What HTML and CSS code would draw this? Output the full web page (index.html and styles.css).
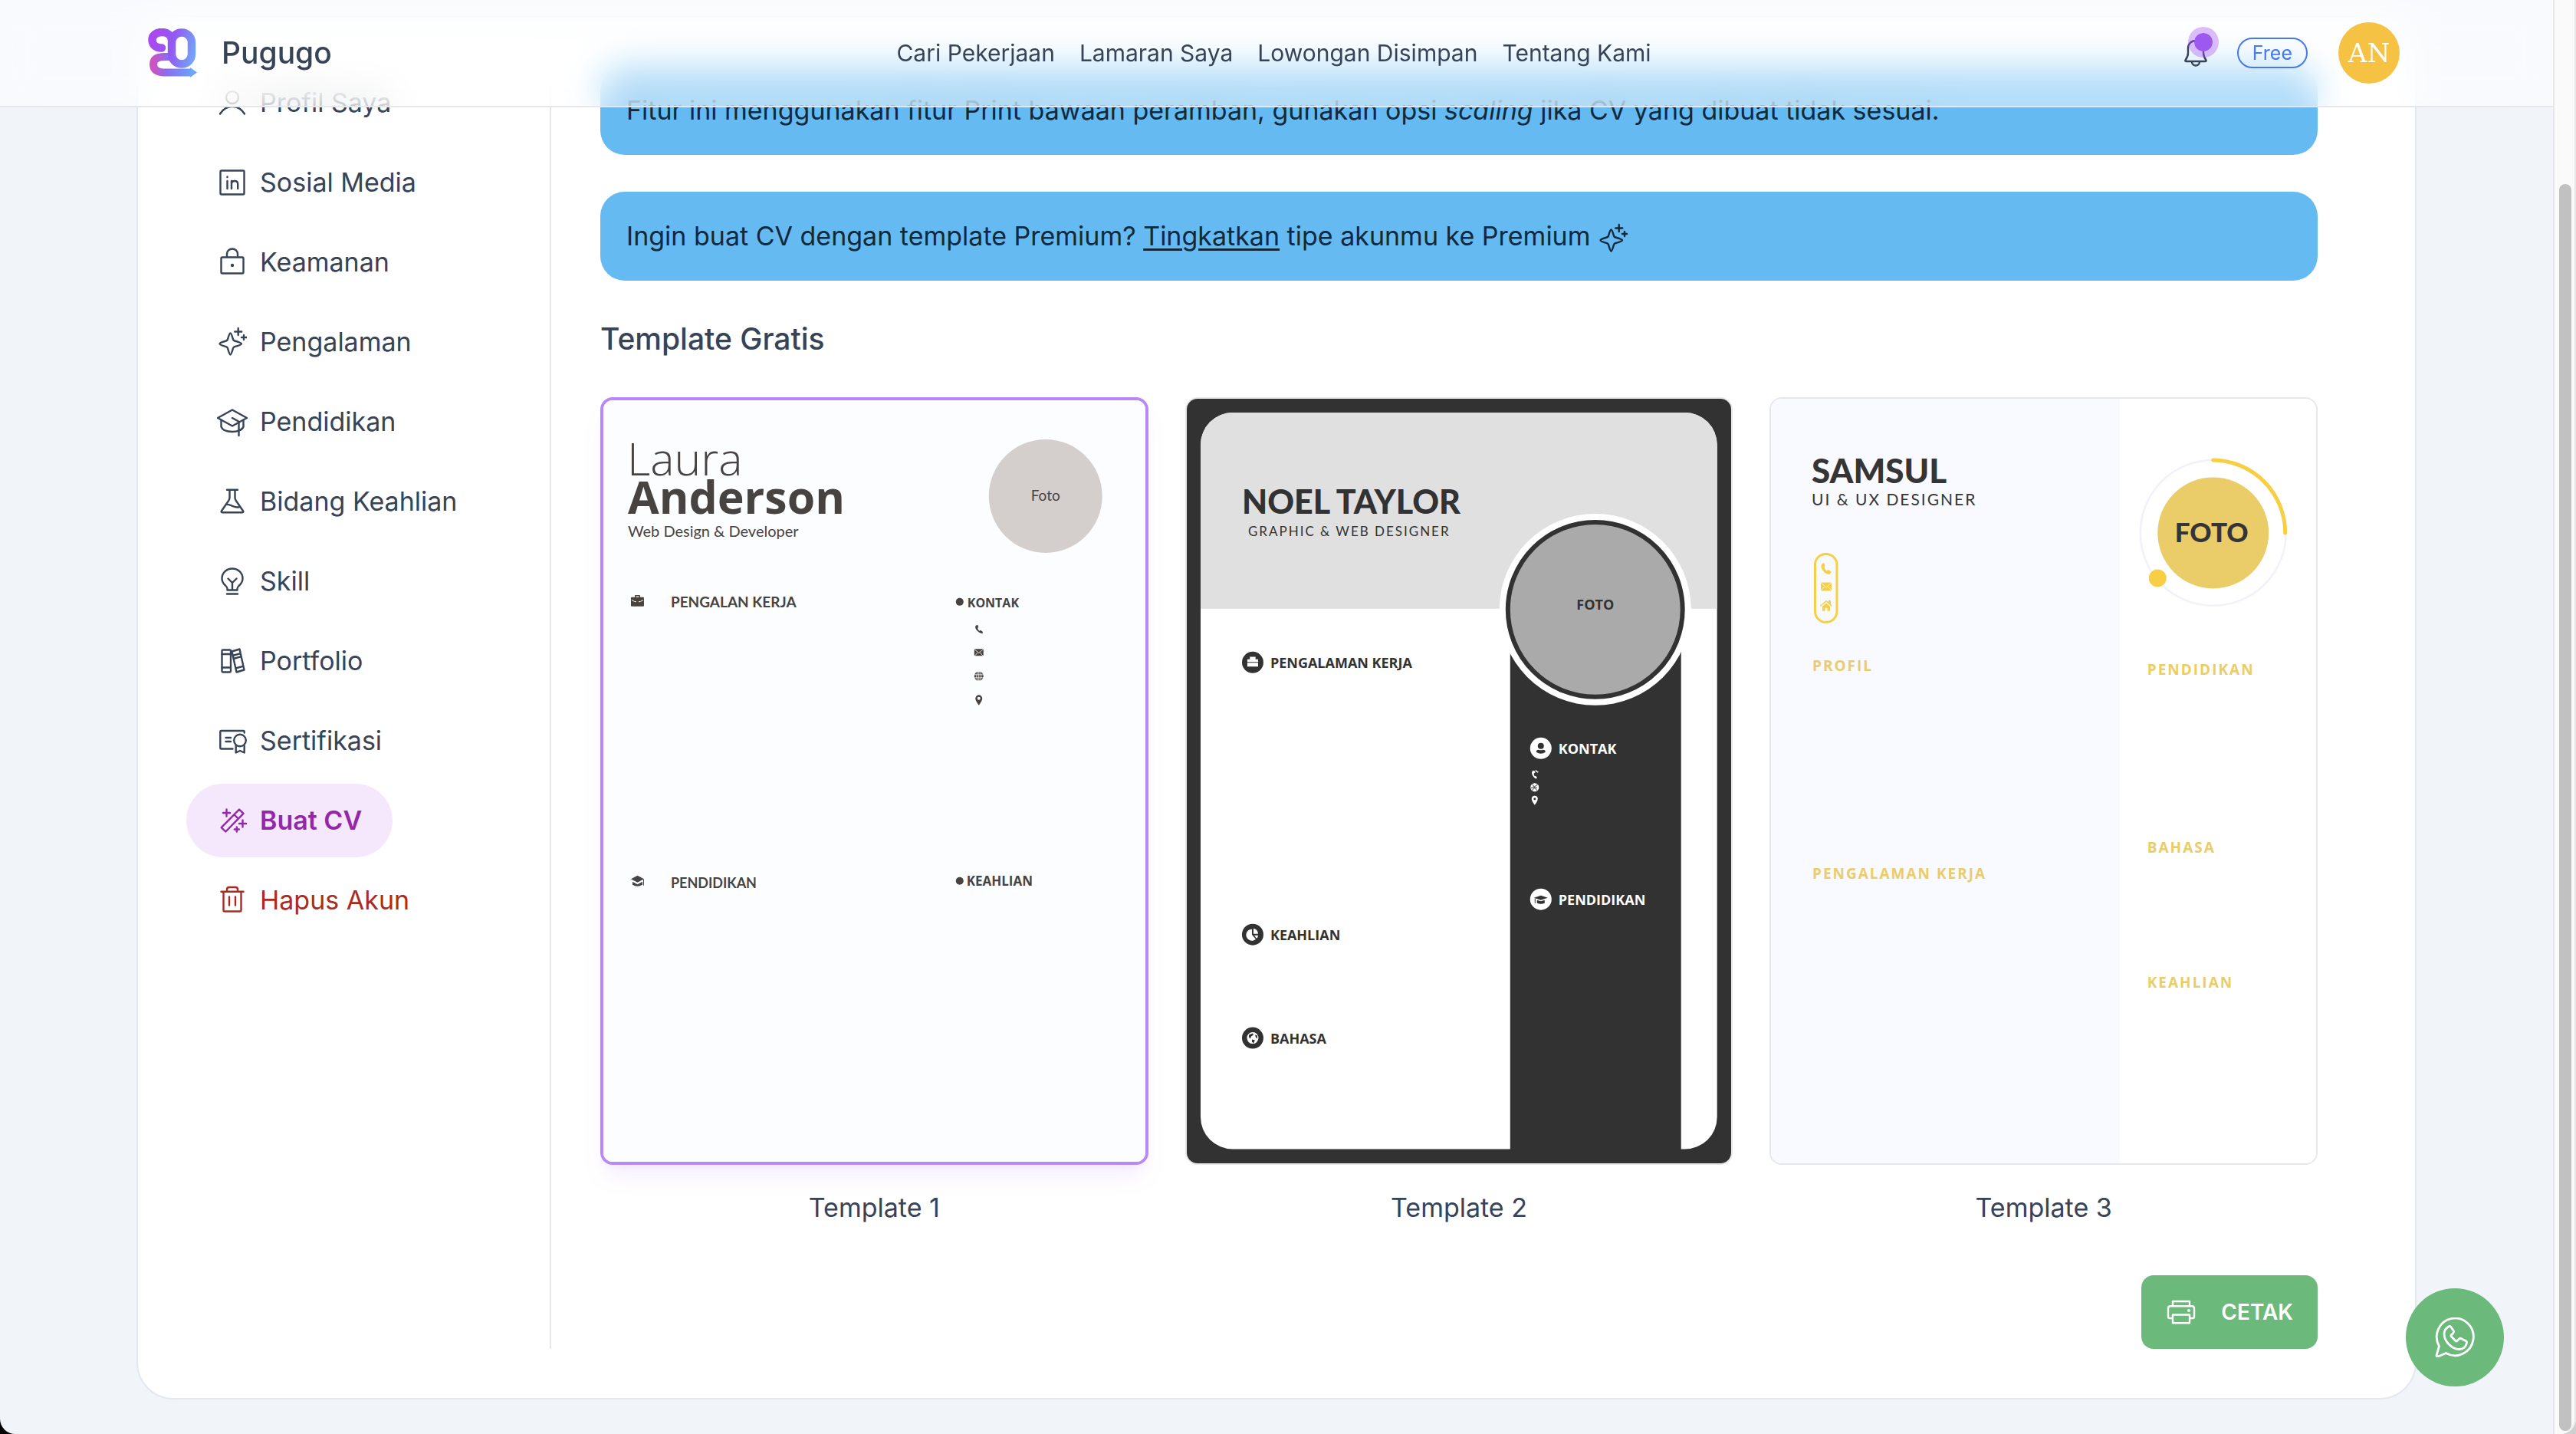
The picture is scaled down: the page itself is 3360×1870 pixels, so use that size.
FILE: index.html
```html
<!DOCTYPE html>
<html lang="id">
<head>
<meta charset="utf-8">
<meta name="viewport" content="width=device-width, initial-scale=1">
<title>Pugugo - Buat CV</title>
<link rel="stylesheet" href="styles.css">
</head>
<body>
<header class="topbar">
  <a class="brand" href="#">
    <svg class="brand-logo" viewBox="0 0 64 64" fill="none" aria-hidden="true">
      <defs>
        <linearGradient id="logo-g" gradientUnits="userSpaceOnUse" x1="4" y1="20" x2="62" y2="34">
          <stop offset="0" stop-color="#a94af0"/><stop offset=".45" stop-color="#9358f3"/><stop offset="1" stop-color="#72a8f8"/>
        </linearGradient>
        <linearGradient id="logo-b" gradientUnits="userSpaceOnUse" x1="6" y1="56" x2="60" y2="58">
          <stop offset="0" stop-color="#cf52c0"/><stop offset=".35" stop-color="#8b6df0"/><stop offset="1" stop-color="#6ba6f7"/>
        </linearGradient>
      </defs>
      <path d="M29 37H22Q7 37 7 47T20 57.500H56" stroke="url(#logo-b)" stroke-width="10"/>
      <path d="M55 51l9 6.500-9 6.500z" fill="#6ba6f7"/>
      <path d="M18 25.500C10 26 5.500 21 5.500 15S11 5 18 5s13 4 13 11" stroke="url(#logo-g)" stroke-width="10.500" stroke-linecap="round"/>
      <rect x="31" y="5.500" width="26" height="41" rx="13" stroke="url(#logo-g)" stroke-width="10.500"/>
    </svg>
    <span>Pugugo</span>
  </a>
  <nav class="topnav" aria-label="Utama">
    <a href="#">Cari Pekerjaan</a>
    <a href="#">Lamaran Saya</a>
    <a href="#">Lowongan Disimpan</a>
    <a href="#">Tentang Kami</a>
  </nav>
  <div class="account">
    <button class="bell" type="button" aria-label="Notifikasi">
      <svg viewBox="0 0 40 40" fill="none" stroke="currentColor" stroke-width="2.400" stroke-linecap="round" stroke-linejoin="round" aria-hidden="true">
        <path d="M20 4c-6 0-10 4.500-10 10v6c0 4-1 6-3.500 9.500-.5 1 0 1.500 1 1.500h25c1 0 1.500-.5 1-1.500C31 26 30 24 30 20v-6c0-5.500-4-10-10-10z"/>
        <path d="M15 31.500c0 3 2.300 5 5 5s5-2 5-5"/>
      </svg>
      <span class="bell-dot"></span>
    </button>
    <span class="plan">Free</span>
    <a class="avatar" href="#">AN</a>
  </div>
</header>

<main class="panel">
  <nav class="sidebar" aria-label="Profil">
    <a class="side-link" href="#">
      <svg class="icon" viewBox="0 0 40 40"><circle cx="20" cy="13" r="8"/><path d="M4 34.500C8 28 13 25 20 25s12 3 16 9.500"/></svg>Profil Saya</a>
    <a class="side-link" href="#">
      <svg class="icon" viewBox="0 0 40 40"><rect x="4.500" y="4.500" width="31" height="31" rx="1.500"/><path d="M13.500 18v10M13.500 12.500v.5M19 28V18M19 22c0-2.500 1.800-4 4.200-4s4 1.500 4 4v6"/></svg>Sosial Media</a>
    <a class="side-link" href="#">
      <svg class="icon" viewBox="0 0 40 40"><rect x="5.500" y="13.500" width="29" height="21" rx="1.500"/><path d="M13 13V9a7 6.500 0 0 1 14 0v4"/><circle cx="20" cy="24" r="1"/></svg>Keamanan</a>
    <a class="side-link" href="#">
      <svg class="icon" viewBox="0 0 40 40"><path d="M17.500 8.500c.8 0 1.500 1 3.500 8 .4 1.200 1 1.700 2 2 7 2 9 2.800 9 3.800s-2 1.900-9 3.800c-1 .4-1.600.9-2 2-2 7-2.700 8.400-3.500 8.400s-1.600-1.500-3.500-8.400c-.4-1.100-1-1.600-2-2-7-1.900-8.500-2.800-8.500-3.800s1.500-1.800 8.500-3.800c1-.3 1.600-.8 2-2 1.900-7 2.700-8 3.500-8z"/><path d="M27.700 2v9M23.200 6.500h9M35 11v6M32 14h6"/></svg>Pengalaman</a>
    <a class="side-link" href="#">
      <svg class="icon" viewBox="0 0 40 40"><path d="M20 4.500 39 15 20 25.500 1 15z"/><path d="M5.500 18v8.500c1.500 4 7 6.500 14.500 6.500 4 0 6.500-.6 8-1.500M34.500 18v8.500c-.8 2.200-3 4-5.500 5M20 15l8.500 4.700V38"/></svg>Pendidikan</a>
    <a class="side-link" href="#">
      <svg class="icon" viewBox="0 0 40 40"><path d="M13 4.700h14M16.500 5v10c0 1.500-.5 2.500-1.200 3.700L5.800 32.500c-.5 1 0 1.700 1 1.700h26.400c1 0 1.500-.7 1-1.700l-9.500-13.800c-.7-1.200-1.200-2.200-1.200-3.700V5M11.500 24c3-.6 5 .5 8.500 1.800 3.500 1.400 6 2 9 1.500"/></svg>Bidang Keahlian</a>
    <a class="side-link" href="#">
      <svg class="icon" viewBox="0 0 40 40"><path d="M13.500 31.500v-2c0-1.500-1-2.500-2.500-4C8.300 23 6.500 20 6.500 16.500 6.500 9 12.500 3.500 20 3.500S33.500 9 33.500 16.500c0 3.500-1.800 6.500-4.500 9-1.500 1.500-2.500 2.500-2.500 4v2zM13 36.500h14M14.500 16.500 20 22l5.500-5.500M20 22v9"/></svg>Skill</a>
    <a class="side-link" href="#">
      <svg class="icon" viewBox="0 0 40 40"><rect x="6.500" y="5.500" width="11.500" height="29" rx="1.200"/><path d="M6.500 11H18M6.500 28.500H18M19.500 7.500l10-3 6 27-10 3zM20.500 13l10-2.800M21.700 17l9.700-2.800M24.500 29.500l10-2.800"/></svg>Portfolio</a>
    <a class="side-link" href="#">
      <svg class="icon" viewBox="0 0 40 40"><path d="M35.700 9.500V8.200c0-.7-.4-1.200-1.200-1.200h-29C4.700 7 4.300 7.500 4.300 8.200v21c0 .8.400 1.300 1.200 1.300h15M11.500 16H18M11.500 21H18"/><circle cx="30" cy="19.500" r="7.800"/><path d="M24.700 26.500v9l5.400-2.500 5.600 2.500v-9"/></svg>Sertifikasi</a>
    <a class="side-link is-active" href="#" aria-current="page">
      <svg class="icon" viewBox="0 0 40 40"><path d="M29 5.500l5.500 5.300L11.300 34.500 5.700 29.200zM22.700 12.500l5 5M12.500 5.500v9M8 10h9M33.500 19.500v9M29 24h9M25.800 28.500v6M22.800 31.500h6"/></svg>Buat CV</a>
    <a class="side-link is-danger" href="#">
      <svg class="icon" viewBox="0 0 40 40"><path d="M5.500 8.700h29M13 8.500V6c0-1.700 1-3 3-3h8c2 0 3 1.300 3 3v2.500M8.500 9v24c0 1 .5 1.500 1.500 1.500h20c1 0 1.500-.5 1.500-1.500V9M16 15.500v11M24 15.500v11"/></svg>Hapus Akun</a>
  </nav>

  <section class="content">
    <p class="alert">Fitur ini menggunakan fitur Print bawaan peramban, gunakan opsi <em>scaling</em> jika CV yang dibuat tidak sesuai.</p>
    <p class="alert">Ingin buat CV dengan template Premium? <a href="#">Tingkatkan</a> tipe akunmu ke Premium
      <svg class="icon alert-icon" viewBox="0 0 40 40" aria-hidden="true"><path d="M17.500 8.500c.8 0 1.500 1 3.500 8 .4 1.200 1 1.700 2 2 7 2 9 2.800 9 3.800s-2 1.900-9 3.800c-1 .4-1.600.9-2 2-2 7-2.700 8.400-3.500 8.400s-1.600-1.500-3.500-8.400c-.4-1.100-1-1.600-2-2-7-1.900-8.500-2.800-8.500-3.800s1.500-1.800 8.500-3.800c1-.3 1.600-.8 2-2 1.900-7 2.700-8 3.500-8z"/><path d="M27.700 2v9M23.200 6.500h9M35 11v6M32 14h6"/></svg></p>
    <h2 class="section-title">Template Gratis</h2>

    <div class="templates">
      <label class="template">
        <input class="template-radio" type="radio" name="template" checked>
        <svg class="preview preview-laura" viewBox="4 4 707 993" preserveAspectRatio="xMidYMid slice">
          <rect width="715" height="1001" fill="#fcfdff"/>
          <text class="f-open w-light" x="35" y="102" font-size="59">Laura</text>
          <text class="f-open w-bold" x="36" y="152" font-size="59">Anderson</text>
          <text class="f-lato" x="36" y="182" font-size="20">Web Design &amp; Developer</text>
          <circle cx="581" cy="129" r="74" fill="#d4cfcc"/>
          <text class="f-lato" x="581" y="135" font-size="19" text-anchor="middle">Foto</text>
          <g>
            <path d="M45 261v-2q0-1 1-1h5q1 0 1 1v2h4q1 0 1 1v10q0 1-1 1H41q-1 0-1-1v-10q0-1 1-1zM46.500 261h4v-1.500h-4z"/>
            <path d="M41 264.500q3.500 2.500 6 2.500M56 264.500q-3.500 2.500-6 2.500" stroke="#fff" fill="none"/>
          </g>
          <text class="f-lato w-bold" x="92" y="274" font-size="19">PENGALAN KERJA</text>
          <circle cx="469" cy="267" r="5"/>
          <text class="f-open w-bold" x="479" y="274" font-size="16">KONTAK</text>
          <path d="M490 298q-2 3 2 7t7 3l0-2-3-2-1.500 1q-2-2-2-4l1-1-1-3z"/>
          <rect x="488" y="328.500" width="12" height="9" rx="1.500"/>
          <path d="M489 329.500l5 4 5-4M489 337l3.500-4M499 337l-3.500-4" stroke="#fff" stroke-width=".8" fill="none"/>
          <circle cx="494" cy="364" r="6"/>
          <path d="M488 362h12M488 366h12M494 358v12" stroke="#fff" stroke-width=".8"/>
          <ellipse cx="494" cy="364" rx="3" ry="6" fill="none" stroke="#fff" stroke-width=".8"/>
          <path d="M494 402q-4.500-6-4.500-9a4.500 4.500 0 0 1 9 0q0 3-4.500 9z"/>
          <circle cx="494" cy="393" r="2" fill="#fff"/>
          <path d="M48.500 624l8.500 4.500-8.500 4.500-8.500-4.500zM42 632l6.500 3.500 6.500-3.500v4q-6.500 4-13 0zM56 629h1v8h-1z"/>
          <text class="f-lato w-bold" x="92" y="640" font-size="18">PENDIDIKAN</text>
          <circle cx="469" cy="631" r="5"/>
          <text class="f-open w-bold" x="478" y="637" font-size="17">KEAHLIAN</text>
        </svg>
        <span class="template-name">Template 1</span>
      </label>

      <label class="template">
        <input class="template-radio" type="radio" name="template">
        <svg class="preview preview-noel" viewBox="2 2 711 997" preserveAspectRatio="xMidYMid slice">
          <rect width="715" height="1001" fill="#323232"/>
          <rect x="20" y="20" width="674" height="961" rx="42" fill="#fff"/>
          <path d="M20 276V62a42 42 0 0 1 42-42h590a42 42 0 0 1 42 42v214z" fill="#e0e0e0"/>
          <path d="M424 277h223v706H424z"/>
          <circle cx="535" cy="277" r="125" fill="#fff"/>
          <circle cx="535" cy="277" r="114" fill="#aaa" stroke="#323232" stroke-width="6"/>
          <text class="f-open w-bold" x="535" y="277" font-size="18" text-anchor="middle">FOTO</text>
          <text class="f-lato w-black" x="74" y="152" font-size="43">NOEL TAYLOR</text>
          <text class="f-lato tracked" x="82" y="181" font-size="17">GRAPHIC &amp; WEB DESIGNER</text>
          <circle cx="88" cy="346" r="14"/>
          <path d="M81 342h14v3.500H81zM81 346.500h14v5H81zM85 342v-2h6v2" fill="#fff"/>
          <path d="M85 342v-2.500h6v2.500" fill="none" stroke="#fff" stroke-width="1.500"/>
          <text class="f-open w-bold" x="111" y="353" font-size="18">PENGALAMAN KERJA</text>
          <circle cx="88" cy="701" r="14"/>
          <path d="M87 694a7.500 7.500 0 1 0 5 13l-5-6z" fill="#fff"/><path d="M89 693a7 7 0 0 1 6 7h-6zM90 702h5q0 3-2 4z" fill="#fff"/>
          <text class="f-open w-bold" x="111" y="708" font-size="18">KEAHLIAN</text>
          <circle cx="88" cy="836" r="14"/>
          <circle cx="88" cy="836" r="7.500" fill="#fff"/>
          <path d="M83 832l5-2 1 2-3 2-1 3-2-2zM87 838l4 1-2 4-2-2zM91 832l3 1v4l-2-2z"/>
          <text class="f-open w-bold" x="111" y="843" font-size="18">BAHASA</text>
          <g class="on-dark">
            <circle cx="464" cy="458" r="14"/>
            <text class="f-open w-bold" x="487" y="465" font-size="18">KONTAK</text>
            <path d="M454 487q-3 2-1 6t5 5l1-2-2-2-1 .5q-1.500-2-1-4l1.500-.5v-2zM457 486l4 3-1 1-3-2z"/>
            <circle cx="456" cy="509" r="5.500"/>
            <path d="M456 532q-4-5-4-8a4 4 0 0 1 8 0q0 3-4 8z"/>
            <circle cx="464" cy="655" r="14"/>
            <text class="f-open w-bold" x="487" y="662" font-size="18">PENDIDIKAN</text>
          </g>
          <circle cx="464" cy="455" r="4"/><path d="M458 463q0-3 3-3 3 1 6 0 3 0 3 3-6 4-12 0z"/>
          <circle cx="456" cy="524" r="1.500"/>
          <path d="M451 510q5-1 9-5M453 505l6 8M453 513q0-3 6-4" stroke="#323232" stroke-width="1" fill="none"/>
          <path d="M455 653l9-3 9 3-9 3zM459 656l5 1.500 5-1.500v4q-5 2-10 0zM456 654h1v6h-1z"/>
        </svg>
        <span class="template-name">Template 2</span>
      </label>

      <label class="template">
        <input class="template-radio" type="radio" name="template">
        <svg class="preview preview-samsul" viewBox="2 2 711 997" preserveAspectRatio="xMidYMid slice">
          <rect width="715" height="1001" fill="#fff"/>
          <rect width="457" height="1001" fill="#f9faff"/>
          <text class="f-lato w-black" x="55" y="112" font-size="44">SAMSUL</text>
          <text class="f-lato tracked" x="55" y="141" font-size="21">UI &amp; UX DESIGNER</text>
          <g fill="#f6cf45">
            <rect x="59.500" y="204.500" width="28.500" height="89" rx="14" fill="none" stroke="#f6cf45" stroke-width="3"/>
            <path d="M69 217q-3 3 0 8 4 6 9 6l3-3-4-3-2.500 1.500q-3-2.500-3-5.500l1-1-1-4z"/>
            <rect x="67" y="241.500" width="14" height="11" rx="1"/>
            <path d="M67 242l7 6 7-6M67 252l5-5M81 252l-5-5" stroke="#f9faff" stroke-width=".8" fill="none"/>
            <path d="M66 272l8-7 3 2.500V265h3v5l2 2-1 1-7-6-7 6zM69 273l5-4 5 4v6h-3.500v-4h-3v4H69z"/>
            <circle cx="579" cy="177" r="95" fill="none" stroke="#f0f1fb" stroke-width="2.500"/>
            <path d="M579 82a95 95 0 0 1 94 95" fill="none" stroke="#f6cf45" stroke-width="5" stroke-linecap="round"/>
            <circle cx="579" cy="177" r="72.500" fill="#eacc69"/>
            <circle cx="506.500" cy="236" r="11.500"/>
          </g>
          <text class="f-lato w-black" x="577" y="189" font-size="35" text-anchor="middle">FOTO</text>
          <g class="gold">
            <text class="f-open w-bold tracked" x="56" y="357" font-size="19">PROFIL</text>
            <text class="f-open w-bold tracked" x="56" y="628" font-size="19">PENGALAMAN KERJA</text>
            <text class="f-open w-bold tracked" x="493" y="362" font-size="19">PENDIDIKAN</text>
            <text class="f-open w-bold tracked" x="493" y="594" font-size="19">BAHASA</text>
            <text class="f-open w-bold tracked" x="493" y="770" font-size="19">KEAHLIAN</text>
          </g>
        </svg>
        <span class="template-name">Template 3</span>
      </label>
    </div>

    <button class="print" type="button">
      <svg class="icon" viewBox="0 0 40 40" aria-hidden="true"><path d="M9 12V6h22v6M9 28H5c-1.500 0-2-.5-2-2V15.500c0-2 1-3.200 3-3.200h28c2 0 3 1.200 3 3.200V26c0 1.500-.5 2-2 2h-4M9 23.500h22v10.800H9z"/><circle cx="30" cy="18" r=".8"/></svg>
      CETAK</button>
  </section>
</main>

<a class="whatsapp" href="#" aria-label="WhatsApp">
  <svg viewBox="0 0 52 52" fill="none" stroke="currentColor" stroke-width="2.800" stroke-linejoin="round" aria-hidden="true">
    <path d="M2 49.500 5.500 37.500A24 24.300 0 1 1 14.500 46.500L4 51q-2 .3-2-1.500z"/>
    <path d="M20.500 12c-1-1-2-.8-3 .2-3 1.700-5.500 4.800-5.500 9.300C12 31 22 41.500 31.500 41.500c5 0 9-3 10-8.500.2-1-.1-1.700-1-2.300L34 27.500c-1-.5-1.800-.2-2.500.6L29 30.500c-.7.700-1.500.6-2.200 0L21.500 25c-.8-.8-.7-1.500 0-2.200l2.500-2.600c.7-.7.900-1.500.5-2.400z"/>
  </svg>
</a>
<div class="scroll-track" aria-hidden="true"><div class="scroll-thumb"></div></div>
</body>
</html>
```
FILE: styles.css
```css
* {
  box-sizing: border-box;
}

html {
  background: linear-gradient(90deg, #000 50%, #cfcfcf 50%);
}

body {
  margin: 0;
  min-height: 100vh;
  padding: 20px 208px 45px 178px;
  border-radius: 0 0 20px 20px;
  background: #f1f5fa;
  color: #374357;
  font-family: Inter, "Open Sans", sans-serif;
  font-size: 34px;
  line-height: 48px;
}

a {
  color: inherit;
  text-decoration: none;
}

button {
  border: 0;
  padding: 0;
  background: none;
  color: inherit;
  font: inherit;
  cursor: pointer;
}

.icon {
  width: 40px;
  height: 40px;
  flex: none;
  fill: none;
  stroke: currentColor;
  stroke-width: 2.4;
  stroke-linecap: round;
  stroke-linejoin: round;
}

/* Top bar */
.topbar {
  position: fixed;
  z-index: 2;
  top: 0;
  left: 0;
  right: 30px;
  height: 140px;
  padding: 0 200px 0 193px;
  display: grid;
  grid-template-columns: 1fr auto 1fr;
  align-items: center;
  border-bottom: 2px solid #e5e7eb;
  background: rgba(255, 255, 255, 0.5);
  backdrop-filter: blur(24px);
}

.brand {
  display: flex;
  align-items: center;
  gap: 32px;
  font-size: 39px;
  font-weight: 500;
}

.brand-logo {
  width: 64px;
  height: 64px;
}

.topnav {
  display: flex;
  gap: 32px;
  font-size: 30px;
}

.account {
  display: flex;
  align-items: center;
  justify-content: flex-end;
}

.bell {
  position: relative;
  width: 40px;
  height: 40px;
  margin-right: 34px;
}

.bell svg {
  display: block;
}

.bell-dot {
  position: absolute;
  top: -14px;
  right: -10px;
  width: 40px;
  height: 40px;
  border: 8px solid rgba(168, 85, 247, 0.38);
  border-radius: 50%;
  background: #9d58f0;
  background-clip: padding-box;
}

.plan {
  margin-right: 40px;
  padding: 0 18px;
  border: 2px solid #4678f0;
  border-radius: 20px;
  color: #4678f0;
  font-size: 25px;
  line-height: 36px;
}

.avatar {
  display: grid;
  place-items: center;
  width: 80px;
  height: 80px;
  border-radius: 50%;
  background: #f6c244;
  color: #fff;
  font-family: "DejaVu Serif", serif;
  font-size: 34px;
}

/* Panel */
.panel {
  display: flex;
  padding: 64px 127px 64px 63px;
  border: 2px solid #e2e8f0;
  border-radius: 48px;
  background: #fff;
}

.sidebar {
  flex: 0 0 476px;
  display: flex;
  flex-direction: column;
  align-items: flex-start;
  gap: 8px;
  border-right: 2px solid #e5e7eb;
}

.side-link {
  display: flex;
  align-items: center;
  gap: 16px;
  padding: 24px 40px;
  border-radius: 48px;
}

.side-link.is-active {
  background: #f5e8fd;
  color: #9327a8;
  font-weight: 600;
}

.side-link.is-danger {
  color: #ab2b22;
}

.content {
  flex: 1;
  min-width: 0;
  margin-left: 64px;
  display: flex;
  flex-direction: column;
}

.alert {
  margin: 0 0 48px;
  padding: 34px;
  border-radius: 32px;
  background: #65baf2;
  color: #12293b;
}

.alert a {
  text-decoration: underline;
  text-decoration-thickness: 3px;
  text-underline-offset: 4px;
}

.alert-icon {
  display: inline-block;
  vertical-align: middle;
  margin: -4px 0;
}

.section-title {
  margin: 0 0 48px;
  font-size: 39px;
  font-weight: 500;
  line-height: 56px;
}

.templates {
  display: grid;
  grid-template-columns: repeat(3, 1fr);
  gap: 48px;
}

.template {
  display: flex;
  flex-direction: column;
  gap: 32px;
  cursor: pointer;
}

.template-radio {
  position: absolute;
  opacity: 0;
  pointer-events: none;
}

.template-name {
  text-align: center;
}

/* CV thumbnails */
.preview {
  display: block;
  width: 100%;
  aspect-ratio: 5 / 7;
  border-radius: 16px;
  border: 2px solid #e5e7eb;
}

.template-radio:checked + .preview {
  border: 4px solid #b987f7;
  box-shadow: 0 20px 30px -6px rgba(168, 85, 247, 0.1), 0 8px 12px -8px rgba(168, 85, 247, 0.1);
}

.preview-laura {
  fill: #474341;
}

.preview-noel {
  fill: #323232;
}

.preview-samsul {
  fill: #353535;
}

.on-dark {
  fill: #fff;
}

.gold {
  fill: #eacc69;
}

.f-open {
  font-family: "Open Sans", sans-serif;
}

.f-lato {
  font-family: Lato, sans-serif;
}

.w-light {
  font-weight: 300;
}

.w-bold {
  font-weight: 700;
}

.w-black {
  font-weight: 900;
}

.tracked {
  letter-spacing: 2px;
}

.print {
  align-self: flex-end;
  display: flex;
  align-items: center;
  gap: 32px;
  margin-top: 64px;
  padding: 24px 32px;
  border-radius: 16px;
  background: #6cb97c;
  color: #fff;
  font-size: 28px;
  font-weight: 600;
}

/* Floating items */
.whatsapp {
  position: fixed;
  z-index: 3;
  right: 94px;
  bottom: 62px;
  display: grid;
  place-items: center;
  width: 128px;
  height: 128px;
  border-radius: 50%;
  background: #6cb97c;
  color: #fff;
}

.whatsapp svg {
  width: 52px;
  height: 52px;
}

.scroll-track {
  position: fixed;
  top: 0;
  right: 0;
  bottom: 0;
  width: 30px;
  padding: 240px 6px 4px;
  border: solid #e7e7e7;
  border-width: 0 2px;
  border-bottom-right-radius: 20px;
  background: #fafafa;
}

.scroll-thumb {
  width: 16px;
  height: 100%;
  border-radius: 8px;
  background: #c1c1c1;
}
```
